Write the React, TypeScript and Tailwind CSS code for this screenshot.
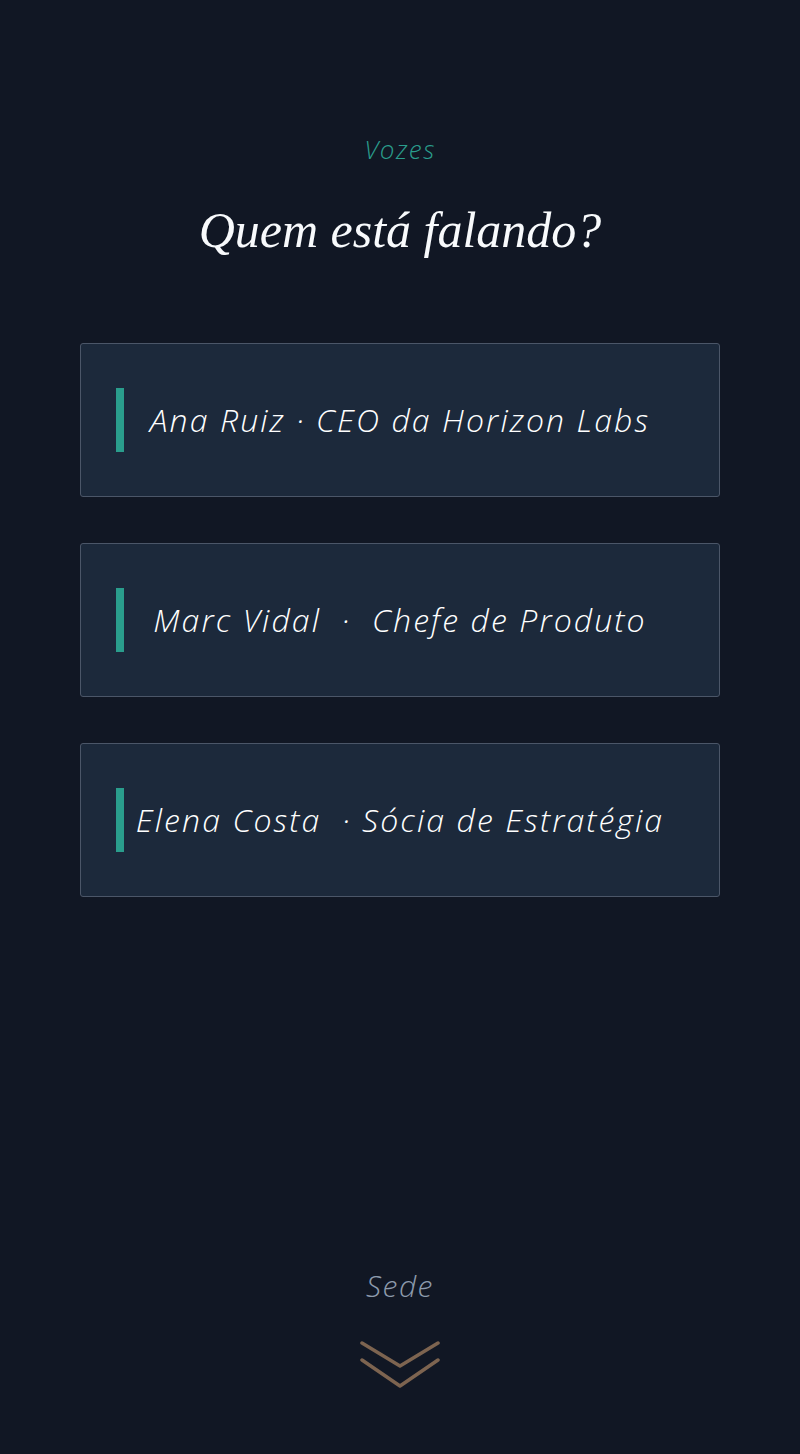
const speakers = [
  { name: "Ana Ruiz · CEO da Horizon Labs" },
  { name: "Marc Vidal  ·  Chefe de Produto" },
  { name: "Elena Costa  · Sócia de Estratégia" },
];

const sans = "font-['Open_Sans','Liberation_Sans',sans-serif]";

function SpeakerCard({ name }: { name: string }) {
  return (
    <div className="relative flex h-[154px] items-center justify-center rounded-[3px] border border-[#4b5668] bg-[#1c293b]">
      {/* accent bar */}
      <div className="absolute left-[35px] top-1/2 h-16 w-2 -translate-y-1/2 bg-[#2a9d8c]" />
      <p
        className={`${sans} whitespace-pre text-[32px] font-light italic leading-none tracking-[2.1px] text-white`}
      >
        {name}
      </p>
    </div>
  );
}

export default function App() {
  return (
    <div className="flex min-h-[1454px] flex-col bg-[#111724]">
      <section className="px-20 pt-[133px]">
        <p
          className={`${sans} text-center text-[26px] leading-8 font-light italic tracking-[1.5px] text-[#2a9d8c]`}
        >
          Vozes
        </p>
        <h2 className="mt-[33px] text-center font-['Liberation_Serif',serif] text-[50px] leading-[64px] italic text-[#f8fafc]">
          Quem está falando?
        </h2>

        <div className="mt-[81px] flex flex-col gap-[46px]">
          {speakers.map((s) => (
            <SpeakerCard key={s.name} name={s.name} />
          ))}
        </div>
      </section>

      <footer className="mt-auto flex flex-col items-center pb-[64px]">
        <p
          className={`${sans} text-[30px] leading-8 font-light italic tracking-[1.5px] text-[#8d9bad]`}
        >
          Sede
        </p>
        <svg
          className="mt-[38px]"
          width="80"
          height="50"
          viewBox="0 0 80 50"
          fill="none"
          stroke="#7d6450"
          strokeWidth="3.5"
          strokeLinecap="round"
          strokeLinejoin="round"
        >
          <path d="M2 3 L40 26 L78 3" />
          <path d="M2 20 L40 46 L78 20" />
        </svg>
      </footer>
    </div>
  );
}
